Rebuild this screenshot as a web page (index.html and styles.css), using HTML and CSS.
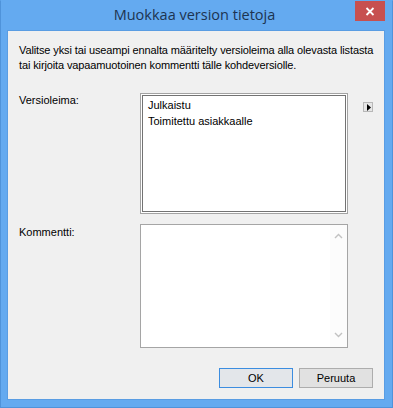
FILE: index.html
```html
<!DOCTYPE html>
<html lang="fi">
<head>
<meta charset="utf-8">
<title>Muokkaa version tietoja</title>
<link rel="stylesheet" href="styles.css">
</head>
<body>
<div class="window">
  <div class="titlebar">
    <span class="title">Muokkaa version tietoja</span>
    <button class="close" aria-label="Sulje">
      <svg width="10" height="9" viewBox="0 0 10 9"><path d="M1.5 1 L8.5 8 M8.5 1 L1.5 8" stroke="#fff" stroke-width="1.8" fill="none"/></svg>
    </button>
  </div>
  <div class="client">
    <p class="intro">Valitse yksi tai useampi ennalta määritelty versioleima alla olevasta listasta<br>tai kirjoita vapaamuotoinen kommentti tälle kohdeversiolle.</p>
    <div class="form">
      <label class="label label-version">Versioleima:</label>
      <div class="listbox">
        <div class="item">Julkaistu</div>
        <div class="item">Toimitettu asiakkaalle</div>
      </div>
      <button class="more" aria-label="Lisää">
        <svg width="5" height="7" viewBox="0 0 5 7"><path d="M0 0 L4 3.5 L0 7 Z" fill="#000"/></svg>
      </button>
      <label class="label label-comment">Kommentti:</label>
      <div class="textbox">
        <div class="textarea"></div>
        <div class="scrollbar">
          <svg width="9" height="6" viewBox="0 0 9 6"><path d="M1 5 L4.5 1.5 L8 5" stroke="#c2c2c2" stroke-width="1.4" fill="none"/></svg>
          <svg width="9" height="6" viewBox="0 0 9 6"><path d="M1 1 L4.5 4.5 L8 1" stroke="#c2c2c2" stroke-width="1.4" fill="none"/></svg>
        </div>
      </div>
    </div>
    <div class="buttons">
      <button class="btn btn-default">OK</button>
      <button class="btn">Peruuta</button>
    </div>
  </div>
</div>
</body>
</html>
```
FILE: styles.css
```css
html, body {
  margin: 0;
  padding: 0;
  background: #64a9ef;
}
.window {
  width: 393px;
  height: 408px;
  box-sizing: border-box;
  background: #64aaf0;
  border: 1px solid #4f93da;
  border-top-color: #64aaf0;
  display: flex;
  flex-direction: column;
  font-family: "Liberation Sans", Arial, sans-serif;
}
.titlebar {
  position: relative;
  height: 29px;
  display: flex;
  align-items: center;
  justify-content: center;
}
.title {
  font-family: "Open Sans", "Noto Sans", sans-serif;
  font-size: 14.5px;
  color: #1d3450;
  margin-top: -2px;
  margin-left: -4px;
}
.close {
  position: absolute;
  top: 0;
  right: 7px;
  width: 30px;
  height: 20px;
  border: none;
  padding: 0;
  background: #c75050;
  display: flex;
  align-items: center;
  justify-content: center;
}
.client {
  margin: 0 7px 7px 6px;
  flex: 1;
  background: #f0f0f0;
  border: 1px solid #5a9de3;
  display: flex;
  flex-direction: column;
  padding: 0 11px 0 11px;
  font-size: 11px;
  color: #000;
}
.intro {
  margin: 12px 0 0 0;
  line-height: 14.5px;
  white-space: nowrap;
  letter-spacing: -0.12px;
}
.form {
  margin-top: 21px;
  display: grid;
  grid-template-columns: 121px 208px 15px 9px;
  grid-template-rows: 121px 124px;
  row-gap: 10px;
  align-items: start;
}
.label {
  padding-top: 1px;
  line-height: 13px;
  grid-column: 1;
}
.label-version { grid-row: 1; }
.label-comment {
  grid-row: 2;
  padding-top: 2px;
}
.listbox {
  grid-column: 2;
  grid-row: 1;
  box-sizing: border-box;
  height: 121px;
  background: #fff;
  border: 1px solid #a3a3a3;
  box-shadow: inset 0 0 0 1px #fff, inset 0 0 0 2px #737373;
  padding: 3px 0 0 7px;
}
.item {
  line-height: 16px;
}
.more {
  grid-column: 4;
  grid-row: 1;
  margin-top: 9px;
  width: 10px;
  height: 10px;
  box-sizing: border-box;
  border: 1px solid #b8b8b8;
  background: #e6e6e6;
  padding: 0 0 0 2px;
  display: flex;
  align-items: center;
  justify-content: center;
}
.textbox {
  grid-column: 2;
  grid-row: 2;
  box-sizing: border-box;
  height: 124px;
  background: #fff;
  border: 1px solid #a5a5a5;
  display: flex;
}
.textarea {
  flex: 1;
}
.scrollbar {
  width: 17px;
  background: #fcfcfc;
  display: flex;
  flex-direction: column;
  justify-content: space-between;
  align-items: center;
  padding: 8px 0 9px 0;
}
.buttons {
  margin-top: 20px;
  display: flex;
  justify-content: flex-end;
  gap: 6px;
}
.btn {
  width: 74px;
  height: 20px;
  box-sizing: border-box;
  border: 1px solid #adadad;
  background: #e1e1e1;
  font-family: "Liberation Sans", Arial, sans-serif;
  font-size: 11px;
  color: #000;
  padding: 0;
}
.btn-default {
  border-color: #3c8de0;
  background: #e3e6ea;
}
```
